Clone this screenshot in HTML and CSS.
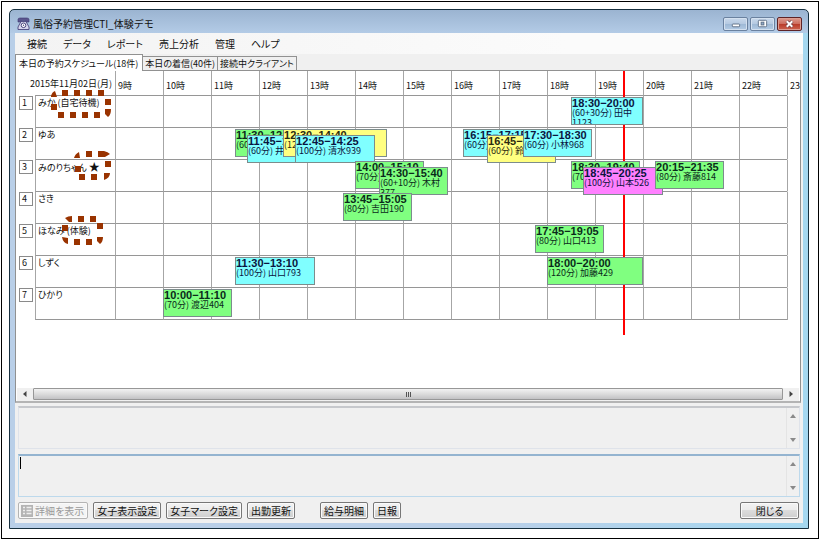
FILE: index.html
```html
<!DOCTYPE html>
<html lang="ja">
<head>
<meta charset="utf-8">
<title>風俗予約管理CTI_体験デモ</title>
<link rel="stylesheet" href="styles.css">
</head>
<body>
<div class="frame">
<main class="window">
  <header class="titlebar">
    <svg class="app-icon" viewBox="0 0 13 13" aria-hidden="true">
      <path d="M1 5V2.500Q1 1 3 1h7q2 0 2 1.500V5H9V3.500H4V5z" fill="#5b568f" stroke="#3c3870" stroke-width=".6"/>
      <path d="M4 4.500h5L12 10v2.500H1V10z" fill="#d7d5ec" stroke="#4b467d" stroke-width=".9"/>
      <circle cx="6.500" cy="8.300" r="2.300" fill="#fff" stroke="#4b467d"/>
      <circle cx="6.500" cy="8.300" r=".7" fill="#4b467d"/>
    </svg>
    <h1 class="title">風俗予約管理CTI_体験デモ</h1>
    <div class="controls">
      <button class="control" type="button" aria-label="最小化"><svg viewBox="0 0 24 13"><rect x="8.500" y="6.500" width="8" height="3" rx=".8" fill="#fff" stroke="#5d6f86"/></svg></button>
      <button class="control" type="button" aria-label="最大化"><svg viewBox="0 0 24 13"><rect x="7.500" y="2.500" width="9" height="7" rx="1" fill="#fff" stroke="#5d6f86"/><rect x="10.500" y="4.500" width="3" height="3" fill="#8fa9c8" stroke="#5d6f86"/></svg></button>
      <button class="control control-close" type="button" aria-label="ウィンドウを閉じる"><svg viewBox="0 0 24 13"><path d="M9 3.500l6 6M15 3.500l-6 6" stroke="#6d3b40" stroke-width="3.600"/><path d="M9 3.500l6 6M15 3.500l-6 6" stroke="#fff" stroke-width="2.200"/></svg></button>
    </div>
  </header>

  <div class="client">
    <nav class="menu">
      <button type="button">接続</button>
      <button type="button">データ</button>
      <button type="button">レポート</button>
      <button type="button">売上分析</button>
      <button type="button">管理</button>
      <button type="button">ヘルプ</button>
    </nav>

    <div class="tabs" role="tablist">
      <button class="tab tab-active" type="button" role="tab" aria-selected="true">本日の予約スケジュール(18件)</button>
      <button class="tab" type="button" role="tab" aria-selected="false">本日の着信(40件)</button>
      <button class="tab" type="button" role="tab" aria-selected="false">接続中クライアント</button>
    </div>

    <section class="panel">
      <div class="viewport">
        <table class="schedule">
          <colgroup><col class="col-no"><col class="col-name"><col class="col-hour" span="15"></colgroup>
          <thead>
            <tr>
              <th class="date" colspan="2">2015年11月02日(月)</th>
              <th>9時</th><th>10時</th><th>11時</th><th>12時</th><th>13時</th><th>14時</th><th>15時</th><th>16時</th><th>17時</th><th>18時</th><th>19時<span class="now" style="--start:35"></span></th><th>20時</th><th>21時</th><th>22時</th><th>23時</th>
            </tr>
          </thead>
          <tbody>
            <tr>
              <td class="no"><span>1</span></td>
              <td class="name">みか (自宅待機)
                <svg class="mark mark-standby" viewBox="0 0 60 30" aria-hidden="true"><path d="M11 1h6v6h-6zM23 1h6v6h-6zM35 1h6v6h-6zM47 1h6v6h-6zM0 7Q1 3 4 2L6 8H0zM0 15h6v6H0zM54 10h6v6h-6zM54 20h6Q60 26 57 28L54 25zM7 23h6v6H7zM19 23h6v6h-6zM31 23h6v6h-6zM43 23h6v6h-6z"/></svg></td>
              <td></td><td></td><td></td><td></td><td></td><td></td><td></td><td></td><td></td>
              <td><div class="event cyan" style="--start:30;--len:90"><b>18:30−20:00</b>(60+30分) 田中<br>1123</div></td>
              <td></td><td></td><td></td><td></td><td></td>
            </tr>
            <tr>
              <td class="no"><span>2</span></td>
              <td class="name">ゆあ</td>
              <td></td><td></td>
              <td><div class="event green" style="--start:30;--len:60"><b>11:30−12:30</b>(60分)</div>
                <div class="event cyan lower" style="--start:45;--len:60"><b>11:45−12:45</b>(60分) 井上</div></td>
              <td><div class="event yellow" style="--start:30;--len:130"><b>12:30−14:40</b>(120分)</div>
                <div class="event cyan lower" style="--start:45;--len:100"><b>12:45−14:25</b>(100分) 清水939</div></td>
              <td></td><td></td><td></td>
              <td><div class="event cyan" style="--start:15;--len:60"><b>16:15−17:15</b>(60分)</div>
                <div class="event yellow lower" style="--start:45;--len:60"><b>16:45−17:45</b>(60分) 鈴木</div></td>
              <td><div class="event cyan" style="--start:30;--len:60"><b>17:30−18:30</b>(60分) 小林968</div></td>
              <td></td><td></td><td></td><td></td><td></td><td></td>
            </tr>
            <tr>
              <td class="no"><span>3</span></td>
              <td class="name">みのりちゃん <span class="star">★</span>
                <svg class="mark mark-star" viewBox="0 0 36 30" aria-hidden="true"><path d="M0 7Q1 3 5 1L6 7zM12 0h6v6h-6zM24 0h6Q34 1 36 3L31 6H24zM31 10h6v6h-6zM1 15h6v6H1zM5 23h6v6H5zM17 23h6v6h-6zM30 22h6Q36 27 30 29z"/></svg></td>
              <td></td><td></td><td></td><td></td><td></td>
              <td><div class="event green" style="--start:0;--len:70"><b>14:00−15:10</b>(70分)</div>
                <div class="event green lower" style="--start:30;--len:70"><b>14:30−15:40</b>(60+10分) 木村<br>377</div></td>
              <td></td><td></td><td></td>
              <td><div class="event green" style="--start:30;--len:70"><b>18:30−19:40</b>(70分)</div>
                <div class="event pink lower" style="--start:45;--len:100"><b>18:45−20:25</b>(100分) 山本526</div></td>
              <td></td>
              <td><div class="event green" style="--start:15;--len:80"><b>20:15−21:35</b>(80分) 斎藤814</div></td>
              <td></td><td></td><td></td>
            </tr>
            <tr>
              <td class="no"><span>4</span></td>
              <td class="name">さき</td>
              <td></td><td></td><td></td><td></td>
              <td><div class="event green" style="--start:45;--len:80"><b>13:45−15:05</b>(80分) 吉田190</div></td>
              <td></td><td></td><td></td><td></td><td></td><td></td><td></td><td></td><td></td><td></td>
            </tr>
            <tr>
              <td class="no"><span>5</span></td>
              <td class="name">ほなみ (体験)
                <svg class="mark mark-trial" viewBox="0 0 42 30" aria-hidden="true"><path d="M3 2Q6 0 10 0V6H7zM16 0h6v6h-6zM28 0h6v6h-6zM35 7h6v6h-6zM0 9h6v6H0zM0 21L6 22V28Q1 27 0 21zM12 23h6v6h-6zM24 23h6v6h-6zM35 21h6Q41 26 38 28L35 25z"/></svg></td>
              <td></td><td></td><td></td><td></td><td></td><td></td><td></td><td></td>
              <td><div class="event green" style="--start:45;--len:80"><b>17:45−19:05</b>(80分) 山口413</div></td>
              <td></td><td></td><td></td><td></td><td></td><td></td>
            </tr>
            <tr>
              <td class="no"><span>6</span></td>
              <td class="name">しずく</td>
              <td></td><td></td>
              <td><div class="event cyan" style="--start:30;--len:100"><b>11:30−13:10</b>(100分) 山口793</div></td>
              <td></td><td></td><td></td><td></td><td></td><td></td>
              <td><div class="event green" style="--start:0;--len:120"><b>18:00−20:00</b>(120分) 加藤429</div></td>
              <td></td><td></td><td></td><td></td><td></td>
            </tr>
            <tr>
              <td class="no"><span>7</span></td>
              <td class="name">ひかり</td>
              <td></td>
              <td><div class="event green" style="--start:0;--len:70"><b>10:00−11:10</b>(70分) 渡辺404</div></td>
              <td></td><td></td><td></td><td></td><td></td><td></td><td></td><td></td><td></td><td></td><td></td><td></td><td></td>
            </tr>
          </tbody>
        </table>
      </div>
      <div class="hscroll">
        <button class="arrow" type="button" aria-label="左へ"><svg viewBox="0 0 8 8"><path d="M5.500 1v6L2 4z"/></svg></button>
        <div class="thumb"><i></i><i></i><i></i></div>
        <button class="arrow" type="button" aria-label="右へ"><svg viewBox="0 0 8 8"><path d="M2.500 1v6L6 4z"/></svg></button>
      </div>
    </section>

    <div class="memo">
      <textarea aria-label="詳細" readonly></textarea>
      <div class="vscroll">
        <button class="arrow" type="button" aria-label="上へ"><svg viewBox="0 0 8 8"><path d="M1 6h6L4 2z"/></svg></button>
        <button class="arrow" type="button" aria-label="下へ"><svg viewBox="0 0 8 8"><path d="M1 2h6L4 6z"/></svg></button>
      </div>
    </div>
    <div class="memo memo-focus">
      <textarea aria-label="メモ"></textarea>
      <div class="vscroll">
        <button class="arrow" type="button" aria-label="上へ"><svg viewBox="0 0 8 8"><path d="M1 6h6L4 2z"/></svg></button>
        <button class="arrow" type="button" aria-label="下へ"><svg viewBox="0 0 8 8"><path d="M1 2h6L4 6z"/></svg></button>
      </div>
    </div>

    <footer class="actions">
      <button class="btn btn-detail" type="button" disabled><svg viewBox="0 0 12 12" aria-hidden="true"><rect width="12" height="12" fill="#b4b4b4"/><path d="M2 2.500h2M2 5.500h2M2 8.500h2M5.500 2.500h5M5.500 5.500h5M5.500 8.500h5" stroke="#eee" stroke-width="1.500"/></svg>詳細を表示</button>
      <button class="btn" type="button">女子表示設定</button>
      <button class="btn" type="button">女子マーク設定</button>
      <button class="btn" type="button">出勤更新</button>
      <button class="btn btn-pay" type="button">給与明細</button>
      <button class="btn" type="button">日報</button>
      <button class="btn btn-close" type="button">閉じる</button>
    </footer>
  </div>
</main>
</div>
</body>
</html>
```
FILE: styles.css
```css
* { box-sizing: border-box; }

body {
  margin: 0;
  min-height: 100vh;
  display: flex;
  background: #fff;
  color: #111;
  font: 10px/14px "Noto Sans CJK JP", sans-serif;
}

button, textarea {
  font: inherit;
  font-feature-settings: inherit;
  color: inherit;
  margin: 0;
  padding: 0;
  border: 0;
  background: none;
}

.frame {
  flex: 1;
  min-width: 0;
  display: flex;
  margin: 1px 2px 2px 1px;
  padding: 7px 9px 9px 7px;
  border: 1px solid #000;
}

.window {
  flex: 1;
  min-width: 0;
  display: flex;
  flex-direction: column;
  padding: 0 5px 5px;
  border: 1px solid #17303f;
  border-radius: 5px 5px 0 0;
  background:
    linear-gradient(#9bb4d1, #b3cbe6 23px, transparent 23px),
    linear-gradient(90deg, #b9cfe8 4px, transparent 4px),
    linear-gradient(90deg, #b9cfe8 60%, #a5d8f0);
}

/* Title bar */
.titlebar {
  height: 23px;
  display: flex;
  align-items: center;
  gap: 3px;
  padding: 4px 0 0 2px;
}
.app-icon { width: 13px; height: 13px; }
.title {
  flex: 1;
  margin: 0;
  font: 10px/16px "Noto Sans CJK JP", sans-serif;
}
.controls { display: flex; gap: 2px; padding-right: 1px; }
.control {
  width: 25px;
  height: 14px;
  border: 1px solid #6a819f;
  border-radius: 2px;
  background: linear-gradient(#c9d9ec, #b4c9e1 50%, #9db8d5 50%, #b3cbe5);
  box-shadow: inset 0 0 0 1px #d4e1f0;
}
.control svg { display: block; width: 23px; height: 12px; }
.control-close {
  border-color: #5e2326;
  background: linear-gradient(#dc9c90, #cd6c5c 50%, #b83a28 50%, #cc6450);
  box-shadow: inset 0 0 0 1px #dd9d92;
}

/* Client area */
.client {
  flex: 1;
  min-width: 0;
  min-height: 0;
  display: flex;
  flex-direction: column;
  background: #f0f0f0;
}

.menu {
  height: 21px;
  display: flex;
  align-items: center;
  gap: 16px;
  padding-left: 12px;
  background: linear-gradient(90deg, #f3f3f3, #fbfbfb 70%);
  font-feature-settings: "palt";
}

.tabs {
  display: flex;
  align-items: flex-end;
  height: 16px;
  font: 9px/14px "Liberation Sans Narrow", "Noto Sans CJK JP", sans-serif;
  font-feature-settings: "palt";
}
.tab {
  height: 14px;
  padding: 0 2px;
  border: 1px solid #919191;
  border-bottom: 0;
  border-left-width: 0;
  white-space: nowrap;
  line-height: 13px;
}
.tab-active {
  position: relative;
  z-index: 1;
  height: 17px;
  margin-bottom: -1px;
  padding: 0 4px 0 3px;
  border-left-width: 1px;
  background: #fff;
  line-height: 15px;
}

/* Schedule */
.panel {
  flex: 1;
  min-width: 0;
  min-height: 0;
  display: flex;
  flex-direction: column;
  margin-right: 2px;
  border: 1px solid #919191;
  border-bottom: 2px solid #b4b4b4;
  background: #fff;
}
.viewport { flex: 1; min-height: 0; overflow: hidden; }

.schedule {
  width: 819px;
  table-layout: fixed;
  border-collapse: separate;
  border-spacing: 0;
  font: 9px/14px "Liberation Sans Narrow", "Noto Sans CJK JP", sans-serif;
  font-feature-settings: "palt";
}
.col-no { width: 19px; }
.col-name { width: 80px; }
.col-hour { width: 48px; }

.schedule th, .schedule td {
  position: relative;
  padding: 0;
  border-left: 1px solid #a6a6a6;
  vertical-align: top;
  text-align: left;
  white-space: nowrap;
}
.schedule th {
  height: 24px;
  padding: 8px 0 0 2px;
  font-weight: normal;
}
.schedule .date {
  padding: 6px 3px 0 0;
  border-left: 0;
  text-align: right;
}
.schedule td { height: 32px; border-top: 1px solid #969696; }
.schedule tr:last-child td { height: 33px; border-bottom: 1px solid #969696; }
.schedule tbody .name { padding-left: 2px; }
.schedule tbody tr td.no { padding-left: 3px; border: 0; border-top: 1px solid transparent; }
.schedule tbody tr td:last-child { border-top-color: transparent; border-bottom: 0; }

.no span {
  display: block;
  width: 14px;
  height: 14px;
  padding-left: 2px;
  border: 1px solid #8a8a8a;
  line-height: 12px;
}
.star { font-size: 11px; line-height: 12px; }

.now {
  position: absolute;
  z-index: 1;
  top: 0;
  left: calc(var(--start) * 48px / 60 - 1px);
  width: 2px;
  height: 264px;
  background: #f00;
}

.event {
  position: absolute;
  z-index: 2;
  top: 1px;
  left: calc(var(--start) * 48px / 60 - 1px);
  width: calc(var(--len) * 48px / 60);
  min-width: 69px;
  height: 28px;
  overflow: hidden;
  border: 1px solid #7c8c8c;
  color: #0a1440;
  line-height: 10px;
}
.event b {
  display: block;
  font: bold 11px/10px "Liberation Sans", sans-serif;
}
.lower { top: 7px; }
.green { background: #80ff80; color: #0a2a1a; }
.cyan { background: #80ffff; }
.yellow { background: #ffff80; color: #2a2a10; }
.pink { background: #ff80ff; }

.mark {
  position: absolute;
  z-index: 3;
  overflow: visible;
  fill: #993300;
}
.mark-standby { left: 15px; top: -7px; width: 60px; height: 30px; }
.mark-star { left: 38px; top: -9px; width: 36px; height: 30px; }
.mark-trial { left: 26px; top: -8px; width: 42px; height: 30px; }

/* Scroll bars */
.arrow {
  width: 16px;
  height: 12px;
  display: flex;
  align-items: center;
  justify-content: center;
}
.arrow svg { width: 8px; height: 8px; fill: #444; }
.hscroll {
  height: 13px;
  display: flex;
  margin: 0 1px 0 1px;
  background: #f0f0f0;
}
.thumb {
  flex: 1;
  display: flex;
  align-items: center;
  justify-content: center;
  gap: 1px;
  height: 12px;
  border: 1px solid #979797;
  border-radius: 1px;
  background: linear-gradient(#f2f2f2, #dcdcdc 50%, #c2c2c4);
}
.thumb i { width: 1px; height: 5px; background: #555; }

/* Memo boxes */
.memo {
  position: relative;
  height: 43px;
  display: flex;
  margin: 3px 3px 0;
  border: 1px solid #dfe3ea;
  border-top: 2px solid #c6c8cc;
}
.memo textarea { flex: 1; min-width: 0; resize: none; outline: 0; overflow: hidden; }
.vscroll {
  width: 13px;
  display: flex;
  flex-direction: column;
  align-items: center;
  justify-content: space-between;
  padding: 2px 0;
  border-left: 1px solid #e4e4e4;
}
.vscroll .arrow { width: 12px; }
.vscroll .arrow svg { fill: #8a8a8a; }
.memo-focus { margin-top: 5px; border-color: #bdd9ec; border-top-color: #94b4d0; }
.memo-focus::before {
  content: "";
  position: absolute;
  left: 1px;
  top: 1px;
  width: 1px;
  height: 12px;
  background: #000;
}

/* Buttons */
.actions {
  display: flex;
  gap: 5px;
  padding: 5px 4px 4px 3px;
  font-feature-settings: "palt";
}
.btn {
  height: 17px;
  padding: 0 3px;
  border: 1px solid #777;
  border-radius: 2px;
  background: linear-gradient(#f3f3f3, #ebebeb 50%, #dcdcdc 50%, #cfcfcf);
  box-shadow: inset 0 0 0 1px #fafafa;
  line-height: 14px;
  white-space: nowrap;
}
.btn:disabled {
  border-color: #b4b4b4;
  background: #f4f4f4;
  color: #9a9a9a;
}
.btn-detail { display: flex; align-items: center; gap: 2px; padding: 0 3px 0 2px; }
.btn-detail svg { width: 12px; height: 12px; }
.btn-pay { margin-left: 20px; }
.btn-close { width: 59px; margin-left: auto; }
```
